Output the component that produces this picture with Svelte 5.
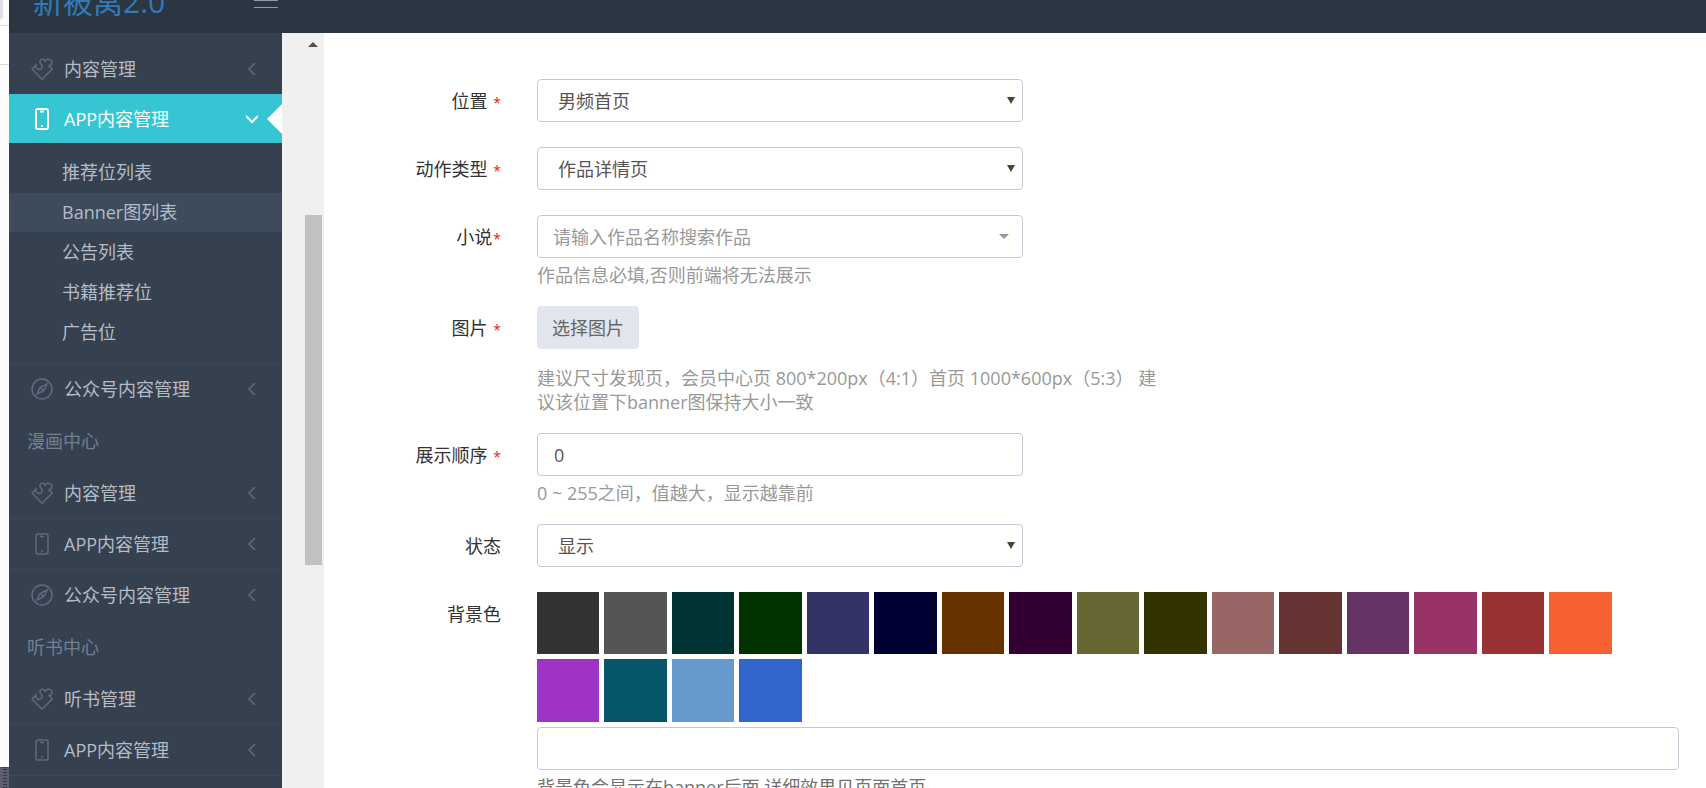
<script>
    let place = "男频首页";
    let action = "作品详情页";
    let novel = "";
    let order = "0";
    let status = "显示";
    let color = "";

    const menu = [
        { icon: "puzzle", text: "内容管理" },
        {
            icon: "phone",
            text: "APP内容管理",
            open: true,
            children: ["推荐位列表", "Banner图列表", "公告列表", "书籍推荐位", "广告位"],
        },
        { icon: "compass", text: "公众号内容管理" },
        { heading: "漫画中心" },
        { icon: "puzzle", text: "内容管理" },
        { icon: "phone", text: "APP内容管理" },
        { icon: "compass", text: "公众号内容管理" },
        { heading: "听书中心" },
        { icon: "puzzle", text: "听书管理" },
        { icon: "phone", text: "APP内容管理" },
    ];

    const current = "Banner图列表";

    const colors = [
        "#333333", "#555555", "#003333", "#003300", "#333366", "#000033", "#663300", "#330033",
        "#666633", "#333300", "#996666", "#663333", "#663366", "#993366", "#993333", "#f56133",
        "#9f33c6", "#05566b", "#6699cc", "#3366cc",
    ];
</script>

<div class="page">
    <div class="edge">
        <span class="edge-tab"></span>
        <span class="edge-bar"></span>
        <span class="edge-body"></span>
        <span class="edge-dock"></span>
    </div>

    <div class="app">
        <header class="topbar">
            <a class="logo" href="#home">新被窝2.0</a>
            <button class="toggler" aria-label="菜单"><span></span><span></span></button>
        </header>

        <div class="body">
            <nav class="sidebar">
                {#each menu as item}
                    {#if item.heading}
                        <h3 class="heading">{item.heading}</h3>
                    {:else}
                        <div class="item">
                            <a class="link" class:open={item.open} href="#menu">
                                <svg class="icon" viewBox="0 0 22 22">
                                    {#if item.icon === "puzzle"}
                                        <path d="M1 11 L4.8 7.2 C4.4 10 6.4 12 8.8 11.4 C11.4 10.8 12 7.8 9.8 5.8 C8.4 4.4 8.6 2.2 10.4 1.4 C12.4 .6 14 1.8 14.2 4 C14.4 2 16.4 .8 18.6 1.4 C21 2.2 21.6 5 20 6.6 C19 7.6 18 7.8 18 7.8 L21.2 11 L11 21.2 Z" />
                                    {:else if item.icon === "phone"}
                                        <rect x="5" y="1" width="12" height="20" rx="2" />
                                        <path d="M9 3.5 H13 M10 18 H12" />
                                    {:else}
                                        <circle cx="11" cy="11" r="10" />
                                        <path d="M16 6 L12.8 12.8 L6 16 L9.2 9.2 Z M9.2 9.2 L12.8 12.8" />
                                    {/if}
                                </svg>
                                <span class="text">{item.text}</span>
                                <svg class="arrow" viewBox="0 0 12 12">
                                    {#if item.open}
                                        <path d="M0 3 L6 9 L12 3" />
                                    {:else}
                                        <path d="M9 0 L3 6 L9 12" />
                                    {/if}
                                </svg>
                            </a>
                            {#if item.children}
                                <ul class="sub">
                                    {#each item.children as child}
                                        <li><a href="#sub" class:current={child === current}>{child}</a></li>
                                    {/each}
                                </ul>
                            {/if}
                        </div>
                    {/if}
                {/each}
                <div class="line"></div>
            </nav>

            <div class="gutter">
                <span class="up"></span>
                <span class="thumb"></span>
            </div>

            <form class="form">
                <div class="row">
                    <label for="place">位置 <i>*</i></label>
                    <div class="field">
                        <div class="select">
                            <select id="place" bind:value={place}>
                                <option>男频首页</option>
                            </select>
                        </div>
                    </div>
                </div>

                <div class="row">
                    <label for="action">动作类型 <i>*</i></label>
                    <div class="field">
                        <div class="select">
                            <select id="action" bind:value={action}>
                                <option>作品详情页</option>
                            </select>
                        </div>
                    </div>
                </div>

                <div class="row">
                    <label for="novel">小说<i>*</i></label>
                    <div class="field">
                        <div class="select search">
                            <select id="novel" bind:value={novel}>
                                <option value="">请输入作品名称搜索作品</option>
                            </select>
                        </div>
                        <p class="help">作品信息必填,否则前端将无法展示</p>
                    </div>
                </div>

                <div class="row">
                    <label for="image">图片 <i>*</i></label>
                    <div class="field">
                        <button id="image" class="pick" type="button">选择图片</button>
                        <p class="help far">建议尺寸发现页，会员中心页 800*200px（4:1）首页 1000*600px（5:3） 建议该位置下banner图保持大小一致</p>
                    </div>
                </div>

                <div class="row">
                    <label for="order">展示顺序 <i>*</i></label>
                    <div class="field">
                        <input id="order" class="short" type="text" bind:value={order} />
                        <p class="help">0 ~ 255之间，值越大，显示越靠前</p>
                    </div>
                </div>

                <div class="row">
                    <label for="status">状态</label>
                    <div class="field">
                        <div class="select">
                            <select id="status" bind:value={status}>
                                <option>显示</option>
                            </select>
                        </div>
                    </div>
                </div>

                <div class="row">
                    <label for="color">背景色</label>
                    <div class="field">
                        <div class="swatches">
                            {#each colors as c}
                                <button
                                    type="button"
                                    class="swatch"
                                    aria-label={c}
                                    style="background: {c}"
                                    on:click={() => (color = c)}
                                ></button>
                            {/each}
                        </div>
                        <input id="color" type="text" bind:value={color} />
                        <p class="help dark">背景色会显示在banner后面,详细效果见页面首页</p>
                    </div>
                </div>
            </form>
        </div>
    </div>
</div>

<style>
:global(body) {
    background: #fff;
}

.page,
.page * {
    box-sizing: border-box;
}

.page {
    display: flex;
    height: 100vh;
    overflow: hidden;
    font-family: "Open Sans", "Noto Sans CJK SC", sans-serif;
    font-size: 18px;
    line-height: 24px;
    color: #333;
}

a {
    text-decoration: none;
}

button,
input,
select {
    font: inherit;
}

/* strip of the window behind */
.edge {
    flex: 0 0 9px;
    display: flex;
    flex-direction: column;
    background: #fcfcfc;
}

.edge-tab {
    width: 3px;
    height: 19px;
    background: #dedfe1;
    border-bottom-right-radius: 3px;
}

.edge-bar {
    height: 40px;
    margin-top: 6px;
    border-top: 1px solid #dcdcdc;
    border-bottom: 1px solid #dcdcdc;
    background: #fff;
}

.edge-body {
    flex: 1;
}

.edge-dock {
    height: 21px;
    border-top: 1px solid #3c3c44;
    border-left: 3px solid #5b6070;
    border-right: 2px solid #5b6070;
    background: repeating-linear-gradient(#5b6070 0 1px, #33363f 1px 2px, #5b6070 2px 3px);
}

.app {
    flex: 1;
    min-width: 0;
    display: flex;
    flex-direction: column;
}

.topbar {
    flex: 0 0 33px;
    display: flex;
    align-items: flex-end;
    background: #2b3643;
    overflow: hidden;
}

.logo {
    width: 245px;
    padding: 0 0 13px 24px;
    font-size: 30px;
    line-height: 36px;
    color: #337ab7;
}

.toggler {
    display: flex;
    flex-direction: column;
    gap: 6px;
    height: 33px;
    padding: 0;
    border: 0;
    background: none;
}

.toggler span {
    width: 24px;
    height: 1px;
    background: #8b9bb0;
}

.body {
    flex: 1;
    min-height: 0;
    display: flex;
}

.sidebar {
    flex: 0 0 273px;
    padding-top: 11px;
    background: #364150;
    overflow: hidden;
}

.link {
    position: relative;
    display: flex;
    align-items: center;
    height: 50px;
    padding: 0 24px 0 22px;
    color: #b4bcc8;
}

.item + .item > .link {
    height: 51px;
    border-top: 1px solid #3d4957;
}

.line {
    border-top: 1px solid #3d4957;
}

.item > .link.open,
.item + .item > .link.open {
    height: 49px;
    border-top: 0;
    background: #36c6d3;
    color: #fff;
}

.link.open::after {
    content: "";
    position: absolute;
    right: 0;
    top: 10px;
    border: 15px solid transparent;
    border-left: 0;
    border-right-color: #fff;
}

.icon {
    width: 22px;
    height: 22px;
    margin-right: 11px;
    fill: none;
    stroke: #606c7d;
    stroke-width: 1.5;
}

.text {
    flex: 1;
}

.arrow {
    width: 12px;
    height: 12px;
    fill: none;
    stroke: #606c7d;
    stroke-width: 1.5;
}

.open .icon,
.open .arrow {
    stroke: #fff;
    stroke-width: 2;
}

.sub {
    margin: 0;
    padding: 9px 0 11px;
    list-style: none;
}

.sub li {
    display: flow-root;
}

.sub a {
    display: block;
    height: 39px;
    margin-top: 1px;
    padding-left: 53px;
    line-height: 39px;
    color: #b4bcc8;
}

.sub a.current {
    background: #3e4b5c;
}

.heading {
    height: 54px;
    margin: 0;
    padding-left: 18px;
    font-size: 18px;
    font-weight: 400;
    line-height: 54px;
    color: #708096;
}

.gutter {
    flex: 0 0 42px;
    display: flex;
    flex-direction: column;
    align-items: flex-end;
    padding-right: 2px;
    background: #f0f0f0;
}

.up {
    margin: 9px 4px 0 0;
    border: 5px solid transparent;
    border-top: 0;
    border-bottom-color: #505050;
}

.thumb {
    width: 17px;
    height: 350px;
    margin-top: 168px;
    background: #c1c1c1;
}

.form {
    flex: 1;
    min-width: 0;
    display: flex;
    flex-direction: column;
    gap: 19px;
    padding: 46px 27px 0 0;
    background: #fff;
}

.row {
    flex-shrink: 0;
    display: grid;
    grid-template-columns: 177px 1fr;
    column-gap: 36px;
    min-height: 49px;
}

label {
    padding-top: 10px;
    text-align: right;
}

label i {
    margin-left: 1px;
    font-size: 14px;
    font-style: normal;
    color: #e02222;
}

.field {
    min-width: 0;
}

input,
select {
    display: block;
    width: 100%;
    height: 43px;
    border: 1px solid #c2cad8;
    border-radius: 4px;
    background: #fff;
    color: #555;
    outline: none;
}

input {
    padding: 0 16px;
}

select {
    padding: 0 20px;
    appearance: none;
}

.select,
.short {
    width: 42.6%;
}

.select {
    position: relative;
}

.select::after {
    content: "";
    position: absolute;
    top: 18px;
    right: 8px;
    border: 4px solid transparent;
    border-top: 7px solid #444;
    border-bottom: 0;
    pointer-events: none;
}

.search select {
    padding: 0 15px;
    color: #999;
}

.search::after {
    top: 19px;
    right: 14px;
    border-width: 5px 5px 0;
    border-top-color: #999;
}

.help {
    max-width: 620px;
    margin: 5px 0 0;
    color: #999;
}

.help.far {
    margin-top: 17px;
}

.help.dark {
    color: #737373;
}

.pick {
    display: block;
    height: 43px;
    padding: 0 15px;
    border: 0;
    border-radius: 4px;
    background: #e1e5ec;
    color: #666;
}

.swatches {
    display: grid;
    grid-template-columns: repeat(17, 1fr);
    gap: 5px;
    margin-bottom: 5px;
}

.swatch {
    aspect-ratio: 1;
    padding: 0;
    border: 0;
    cursor: pointer;
}

/* the last column stays empty */
.swatch:nth-child(16n + 1) {
    grid-column-start: 1;
}
</style>
